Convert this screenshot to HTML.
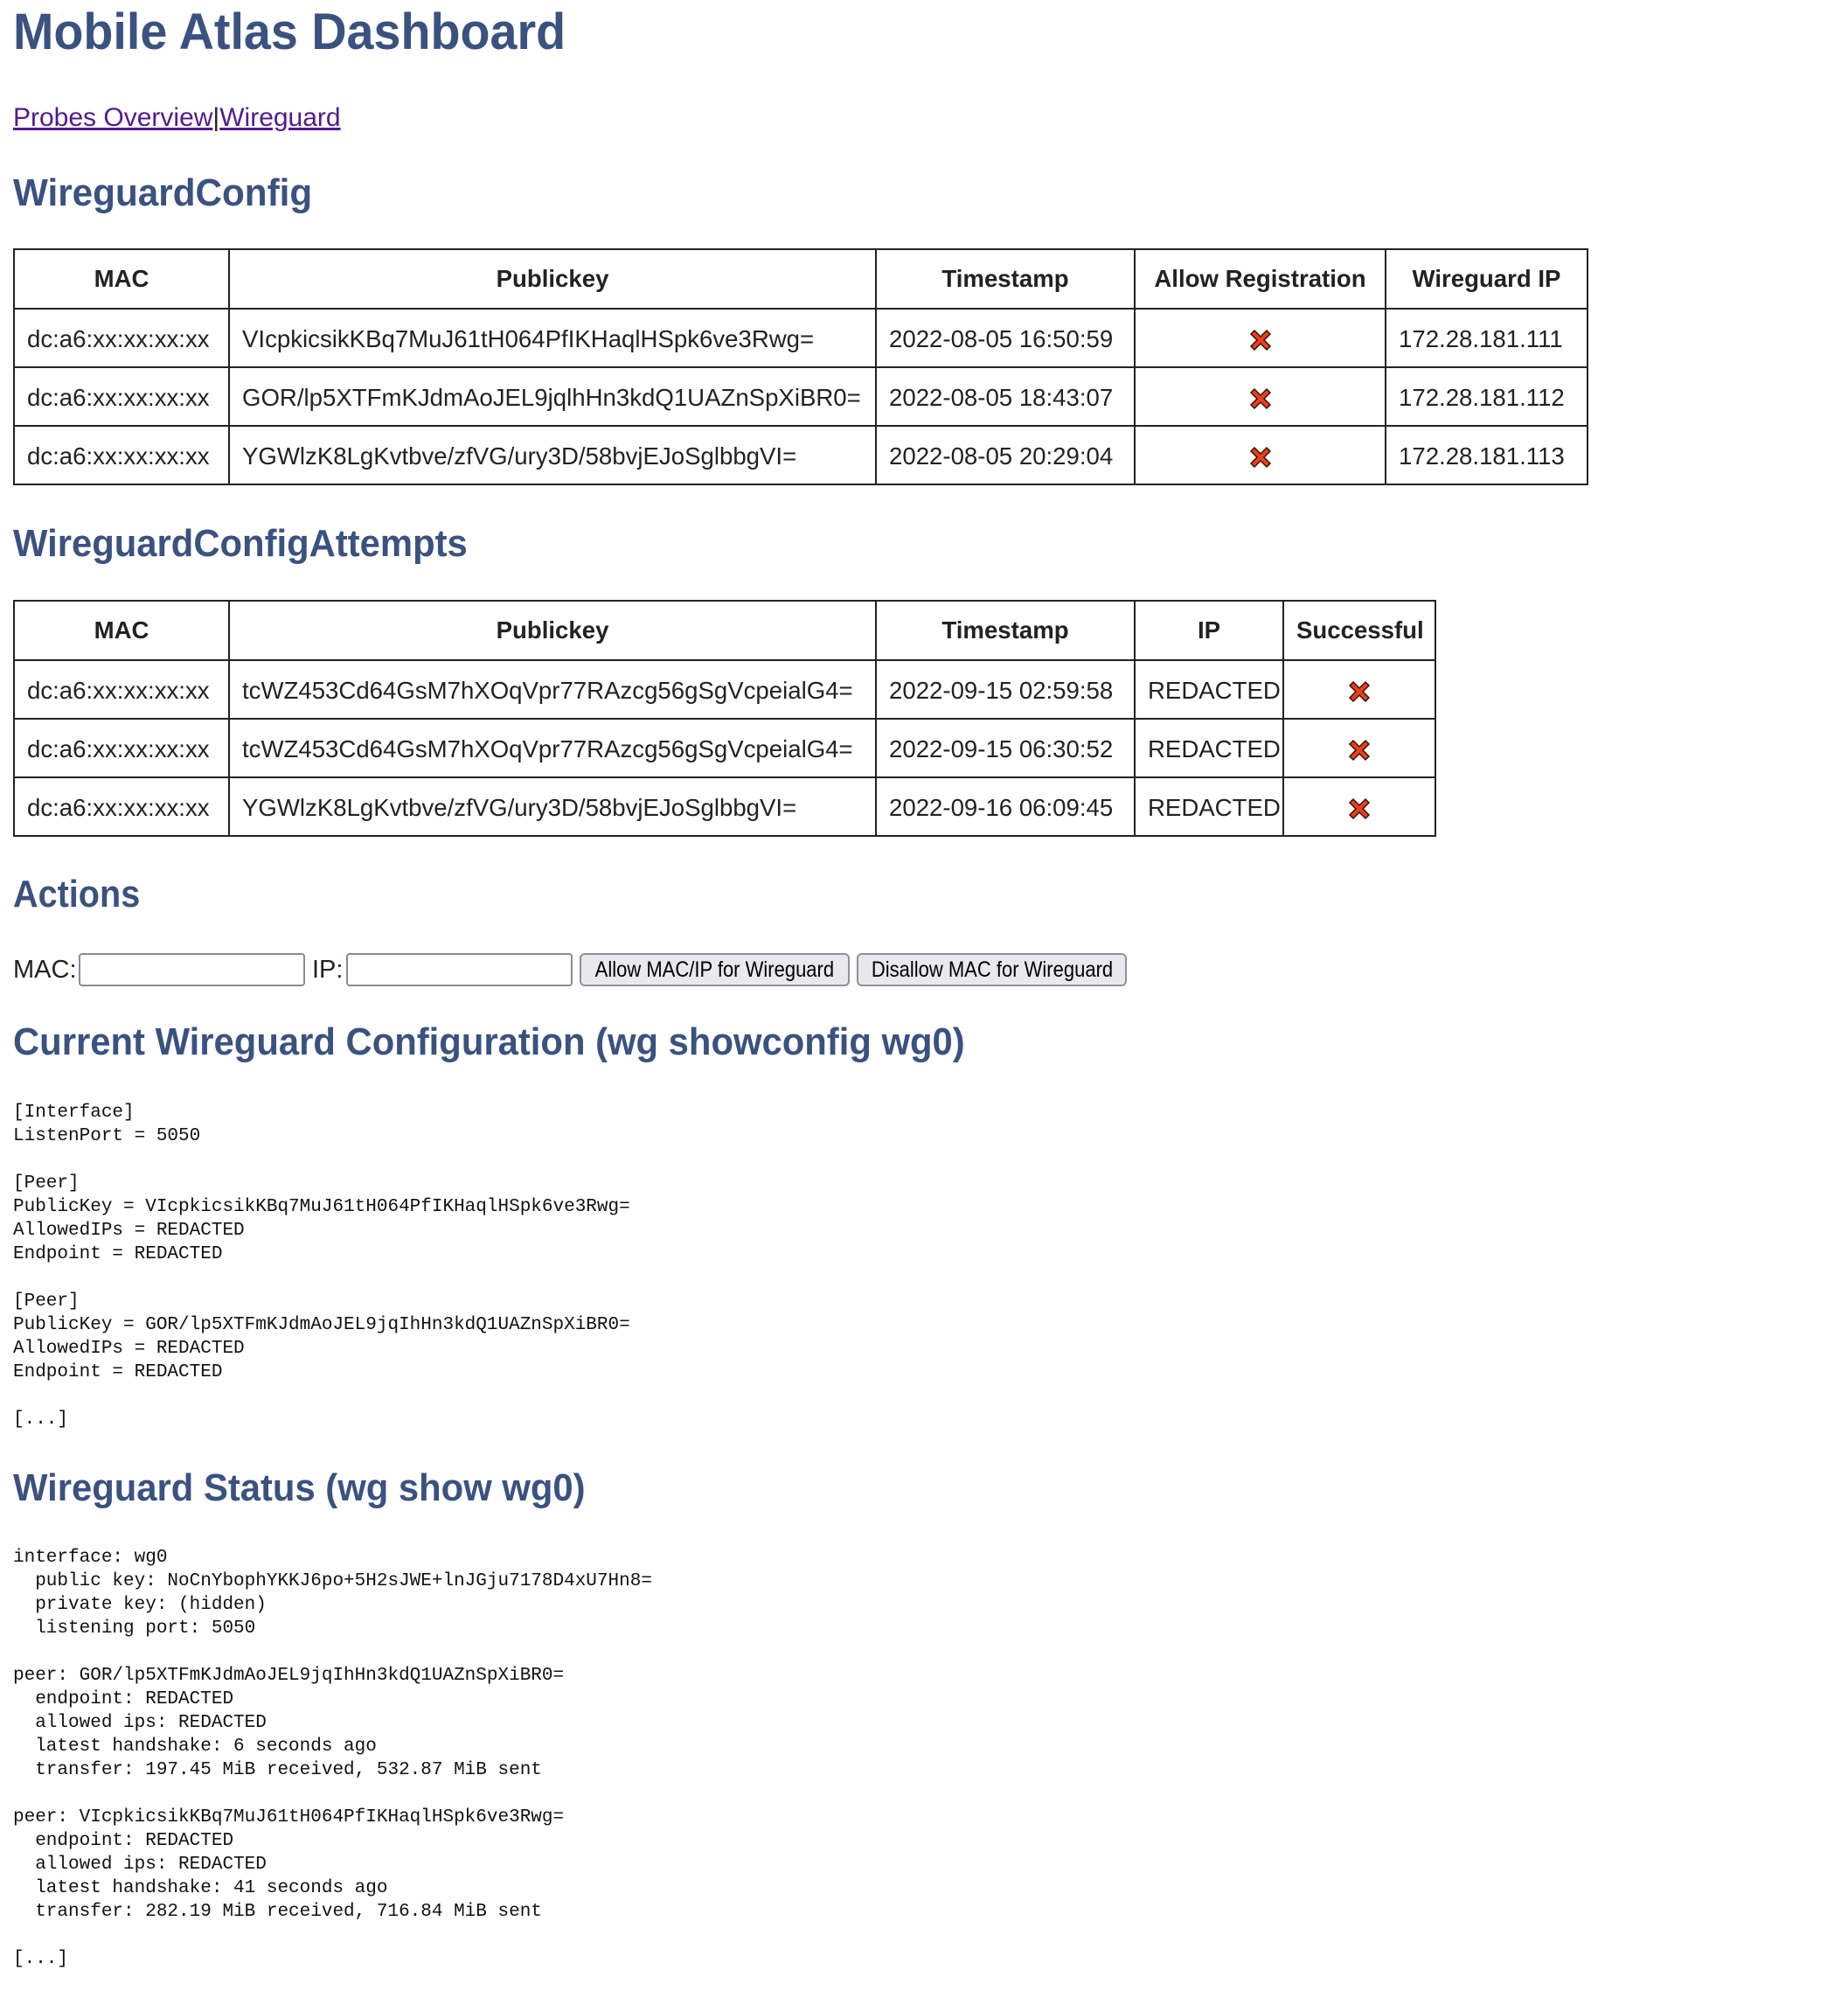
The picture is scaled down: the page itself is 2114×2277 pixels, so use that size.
<!DOCTYPE html>
<html><head><meta charset="utf-8">
<style>
html,body{margin:0;padding:0;background:#fff;}
body{width:2114px;height:2277px;position:relative;overflow:hidden;font-family:"Liberation Sans",sans-serif;color:#222;}
.h{position:absolute;left:15px;margin:0;color:#3a5280;font-weight:bold;white-space:nowrap;transform-origin:0 50%;line-height:1;}
.links{position:absolute;left:15px;top:118px;font-size:30px;line-height:34px;white-space:nowrap;transform-origin:0 50%;}
.links a{color:#551a8b;text-decoration:underline;}
table{position:absolute;left:15px;border-collapse:collapse;table-layout:fixed;font-size:27.6px;}
td,th{border:2px solid #222;padding:0 14px;white-space:nowrap;overflow:hidden;box-sizing:border-box;}
th{height:68px;font-weight:bold;}
td{height:67px;padding-top:3px;}
td.c{text-align:center;}
td.c svg{vertical-align:middle;}
pre{position:absolute;left:15px;margin:0;font-family:"Liberation Mono",monospace;font-size:21px;line-height:27px;color:#111;}
.lbl{position:absolute;top:1109px;font-size:29px;line-height:34px;transform:translateY(-50%);}
.inp{position:absolute;top:1090px;height:38px;border:2px solid #8a8a96;border-radius:4px;box-sizing:border-box;background:#fff;}
.btn{position:absolute;top:1090px;height:38px;border:2px solid #8f8f9d;border-radius:6px;box-sizing:border-box;background:#e9e9ed;font-size:25px;line-height:34px;text-align:center;color:#000;white-space:nowrap;overflow:hidden;}
.btn span{display:inline-block;transform:scaleX(0.88);margin:0 -30px;}
</style></head><body>

<h1 class="h" style="top:8px;font-size:58px;transform:scaleX(0.96);">Mobile Atlas Dashboard</h1>
<div class="links"><a>Probes Overview</a>|<a>Wireguard</a></div>

<h2 class="h" style="top:199px;font-size:44px;transform:scaleX(0.96);">WireguardConfig</h2>

<table style="top:284px;width:1800px;">
<colgroup><col style="width:246px"><col style="width:740px"><col style="width:296px"><col style="width:287px"><col style="width:231px"></colgroup>
<tr><th>MAC</th><th>Publickey</th><th>Timestamp</th><th>Allow Registration</th><th>Wireguard IP</th></tr>
<tr><td>dc:a6:xx:xx:xx:xx</td><td>VIcpkicsikKBq7MuJ61tH064PfIKHaqlHSpk6ve3Rwg=</td><td>2022-08-05 16:50:59</td><td class="c"><svg width="32" height="32" viewBox="0 0 32 32"><path d="M5 9 9 5 16 12 23 5 27 9 20 16 27 23 23 27 16 20 9 27 5 23 12 16Z" fill="#e8401c" stroke="#3a1006" stroke-width="1.5"/></svg></td><td>172.28.181.111</td></tr>
<tr><td>dc:a6:xx:xx:xx:xx</td><td>GOR/lp5XTFmKJdmAoJEL9jqlhHn3kdQ1UAZnSpXiBR0=</td><td>2022-08-05 18:43:07</td><td class="c"><svg width="32" height="32" viewBox="0 0 32 32"><path d="M5 9 9 5 16 12 23 5 27 9 20 16 27 23 23 27 16 20 9 27 5 23 12 16Z" fill="#e8401c" stroke="#3a1006" stroke-width="1.5"/></svg></td><td>172.28.181.112</td></tr>
<tr><td>dc:a6:xx:xx:xx:xx</td><td>YGWlzK8LgKvtbve/zfVG/ury3D/58bvjEJoSglbbgVI=</td><td>2022-08-05 20:29:04</td><td class="c"><svg width="32" height="32" viewBox="0 0 32 32"><path d="M5 9 9 5 16 12 23 5 27 9 20 16 27 23 23 27 16 20 9 27 5 23 12 16Z" fill="#e8401c" stroke="#3a1006" stroke-width="1.5"/></svg></td><td>172.28.181.113</td></tr>
</table>

<h2 class="h" style="top:600px;font-size:44px;transform:scaleX(0.95);">WireguardConfigAttempts</h2>

<table style="top:686px;width:1626px;">
<colgroup><col style="width:246px"><col style="width:740px"><col style="width:296px"><col style="width:170px"><col style="width:174px"></colgroup>
<tr><th>MAC</th><th>Publickey</th><th>Timestamp</th><th>IP</th><th>Successful</th></tr>
<tr><td>dc:a6:xx:xx:xx:xx</td><td>tcWZ453Cd64GsM7hXOqVpr77RAzcg56gSgVcpeialG4=</td><td>2022-09-15 02:59:58</td><td>REDACTED</td><td class="c"><svg width="32" height="32" viewBox="0 0 32 32"><path d="M5 9 9 5 16 12 23 5 27 9 20 16 27 23 23 27 16 20 9 27 5 23 12 16Z" fill="#e8401c" stroke="#3a1006" stroke-width="1.5"/></svg></td></tr>
<tr><td>dc:a6:xx:xx:xx:xx</td><td>tcWZ453Cd64GsM7hXOqVpr77RAzcg56gSgVcpeialG4=</td><td>2022-09-15 06:30:52</td><td>REDACTED</td><td class="c"><svg width="32" height="32" viewBox="0 0 32 32"><path d="M5 9 9 5 16 12 23 5 27 9 20 16 27 23 23 27 16 20 9 27 5 23 12 16Z" fill="#e8401c" stroke="#3a1006" stroke-width="1.5"/></svg></td></tr>
<tr><td>dc:a6:xx:xx:xx:xx</td><td>YGWlzK8LgKvtbve/zfVG/ury3D/58bvjEJoSglbbgVI=</td><td>2022-09-16 06:09:45</td><td>REDACTED</td><td class="c"><svg width="32" height="32" viewBox="0 0 32 32"><path d="M5 9 9 5 16 12 23 5 27 9 20 16 27 23 23 27 16 20 9 27 5 23 12 16Z" fill="#e8401c" stroke="#3a1006" stroke-width="1.5"/></svg></td></tr>
</table>

<h2 class="h" style="top:1001px;font-size:44px;transform:scaleX(0.9);">Actions</h2>

<div class="lbl" style="left:15px;">MAC:</div>
<div class="inp" style="left:90px;width:259px;"></div>
<div class="lbl" style="left:357px;">IP:</div>
<div class="inp" style="left:396px;width:259px;"></div>
<div class="btn" style="left:663px;width:309px;"><span>Allow MAC/IP for Wireguard</span></div>
<div class="btn" style="left:980px;width:309px;"><span>Disallow MAC for Wireguard</span></div>

<h2 class="h" style="top:1170px;font-size:44px;transform:scaleX(0.95);">Current Wireguard Configuration (wg showconfig wg0)</h2>

<pre style="top:1259px;">[Interface]
ListenPort = 5050

[Peer]
PublicKey = VIcpkicsikKBq7MuJ61tH064PfIKHaqlHSpk6ve3Rwg=
AllowedIPs = REDACTED
Endpoint = REDACTED

[Peer]
PublicKey = GOR/lp5XTFmKJdmAoJEL9jqIhHn3kdQ1UAZnSpXiBR0=
AllowedIPs = REDACTED
Endpoint = REDACTED

[...]</pre>

<h2 class="h" style="top:1680px;font-size:44px;transform:scaleX(0.95);">Wireguard Status (wg show wg0)</h2>

<pre style="top:1768px;">interface: wg0
  public key: NoCnYbophYKKJ6po+5H2sJWE+lnJGju7178D4xU7Hn8=
  private key: (hidden)
  listening port: 5050

peer: GOR/lp5XTFmKJdmAoJEL9jqIhHn3kdQ1UAZnSpXiBR0=
  endpoint: REDACTED
  allowed ips: REDACTED
  latest handshake: 6 seconds ago
  transfer: 197.45 MiB received, 532.87 MiB sent

peer: VIcpkicsikKBq7MuJ61tH064PfIKHaqlHSpk6ve3Rwg=
  endpoint: REDACTED
  allowed ips: REDACTED
  latest handshake: 41 seconds ago
  transfer: 282.19 MiB received, 716.84 MiB sent

[...]</pre>

</body></html>
